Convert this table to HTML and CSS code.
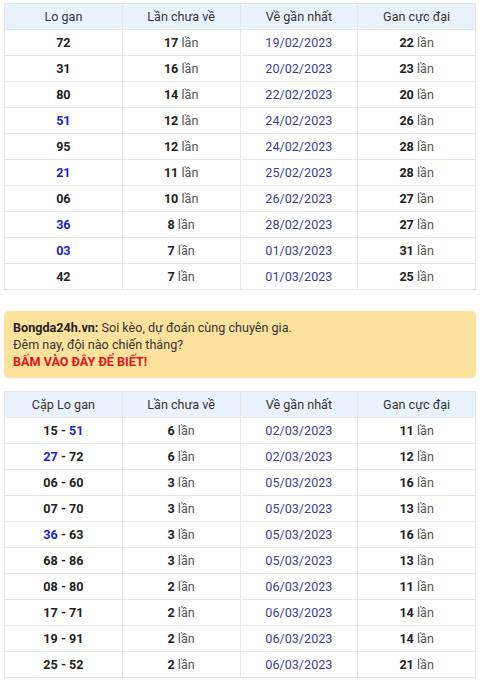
FILE: index.html
```html
<!DOCTYPE html>
<html lang="vi">
<head>
<meta charset="utf-8">
<link rel="stylesheet" href="styles.css">
</head>
<body>
<div class="page">
<table class="lt">
<thead><tr><th>Lo gan</th><th>Lần chưa về</th><th>Về gần nhất</th><th>Gan cực đại</th></tr></thead>
<tbody>
<tr><td class="num">72</td><td><b>17</b> lần</td><td class="date">19/02/2023</td><td><b>22</b> lần</td></tr>
<tr><td class="num">31</td><td><b>16</b> lần</td><td class="date">20/02/2023</td><td><b>23</b> lần</td></tr>
<tr><td class="num">80</td><td><b>14</b> lần</td><td class="date">22/02/2023</td><td><b>20</b> lần</td></tr>
<tr><td class="num"><span class="blue">51</span></td><td><b>12</b> lần</td><td class="date">24/02/2023</td><td><b>26</b> lần</td></tr>
<tr><td class="num">95</td><td><b>12</b> lần</td><td class="date">24/02/2023</td><td><b>28</b> lần</td></tr>
<tr><td class="num"><span class="blue">21</span></td><td><b>11</b> lần</td><td class="date">25/02/2023</td><td><b>28</b> lần</td></tr>
<tr><td class="num">06</td><td><b>10</b> lần</td><td class="date">26/02/2023</td><td><b>27</b> lần</td></tr>
<tr><td class="num"><span class="blue">36</span></td><td><b>8</b> lần</td><td class="date">28/02/2023</td><td><b>27</b> lần</td></tr>
<tr><td class="num"><span class="blue">03</span></td><td><b>7</b> lần</td><td class="date">01/03/2023</td><td><b>31</b> lần</td></tr>
<tr><td class="num">42</td><td><b>7</b> lần</td><td class="date">01/03/2023</td><td><b>25</b> lần</td></tr>
</tbody>
</table>

<div class="promo">
<div><b>Bongda24h.vn:</b> Soi kèo, dự đoán cùng chuyên gia.</div>
<div>Đêm nay, đội nào chiến thắng?</div>
<div class="red">BẤM VÀO ĐÂY ĐỂ BIẾT!</div>
</div>

<table class="lt">
<thead><tr><th>Cặp Lo gan</th><th>Lần chưa về</th><th>Về gần nhất</th><th>Gan cực đại</th></tr></thead>
<tbody>
<tr><td class="num">15 - <span class="blue">51</span></td><td><b>6</b> lần</td><td class="date">02/03/2023</td><td><b>11</b> lần</td></tr>
<tr><td class="num"><span class="blue">27</span> - 72</td><td><b>6</b> lần</td><td class="date">02/03/2023</td><td><b>12</b> lần</td></tr>
<tr><td class="num">06 - 60</td><td><b>3</b> lần</td><td class="date">05/03/2023</td><td><b>16</b> lần</td></tr>
<tr><td class="num">07 - 70</td><td><b>3</b> lần</td><td class="date">05/03/2023</td><td><b>13</b> lần</td></tr>
<tr><td class="num"><span class="blue">36</span> - 63</td><td><b>3</b> lần</td><td class="date">05/03/2023</td><td><b>16</b> lần</td></tr>
<tr><td class="num">68 - 86</td><td><b>3</b> lần</td><td class="date">05/03/2023</td><td><b>13</b> lần</td></tr>
<tr><td class="num">08 - 80</td><td><b>2</b> lần</td><td class="date">06/03/2023</td><td><b>11</b> lần</td></tr>
<tr><td class="num">17 - 71</td><td><b>2</b> lần</td><td class="date">06/03/2023</td><td><b>14</b> lần</td></tr>
<tr><td class="num">19 - 91</td><td><b>2</b> lần</td><td class="date">06/03/2023</td><td><b>14</b> lần</td></tr>
<tr><td class="num">25 - 52</td><td><b>2</b> lần</td><td class="date">06/03/2023</td><td><b>21</b> lần</td></tr>
</tbody>
</table>
</div>
</body>
</html>
```

FILE: styles.css
```css
html, body {
  margin: 0;
  padding: 0;
  background: #fff;
}
body {
  font-family: Roboto, "Liberation Sans", Arial, sans-serif;
  font-size: 12.6px;
  color: #222;
}
.page {
  padding: 3px 4px 0 4px;
}
.lt {
  width: 472px;
  border-collapse: collapse;
  table-layout: fixed;
  border: 1px solid #e2e2e2;
}
.lt th, .lt td {
  height: 25px;
  padding: 0;
  border: 1px solid #e6e6e6;
  text-align: center;
  vertical-align: middle;
  line-height: 16px;
}
.lt th {
  background: #eaf3fd;
  font-weight: normal;
  color: #333;
}
.lt td {
  color: #555;
}
.lt td b {
  color: #222;
  font-weight: bold;
}
.lt td.num {
  font-weight: bold;
  color: #222;
}
.lt td.date {
  color: #3d3f94;
}
.blue {
  color: #2323c9;
}
.promo {
  margin: 21px 0 13px 0;
  background: #fde29e;
  border-radius: 5px;
  padding: 8px 9px;
  line-height: 17px;
  color: #333;
  box-shadow: 0 0 2px rgba(0,0,0,0.08);
}
.promo b {
  color: #222;
}
.promo .red {
  color: #e0161c;
  font-weight: bold;
}
```
